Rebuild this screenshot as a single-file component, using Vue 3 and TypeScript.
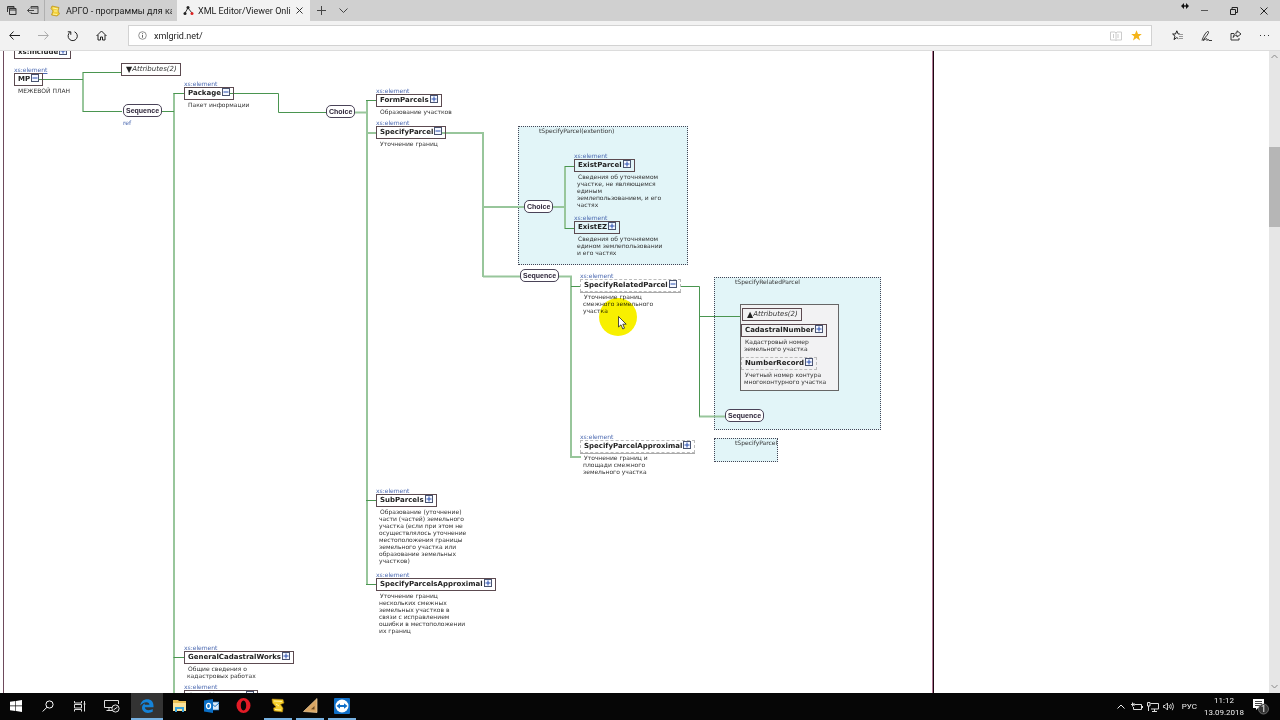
<script setup lang="ts">
import { reactive, ref } from 'vue'

interface SchemaNode {
  name: string
  x: number
  y: number
  open?: boolean
  optional?: boolean
  plain?: boolean
  text?: string
}

interface Panel { x: number; y: number; w: number; h: number; title: string }
interface Pill { label: string; x: number; y: number }

const address = ref('xmlgrid.net/')

const panels: Panel[] = [
  { x: 518, y: 75, w: 170, h: 139, title: 'tSpecifyParcel(extention)' },
  { x: 714, y: 226, w: 167, h: 153, title: 'tSpecifyRelatedParcel' },
  { x: 714, y: 387, w: 64, h: 24, title: 'tSpecifyParcel' },
]

const darkLines = [
  'M36 28.5H83M83 21.5H121M83 60.5H122',
  'M162 60.5H174M173.5 42.5H184M173.5 606.5H184',
  'M228 42.5H278.5V61.5H326',
  'M366 49.5H377M366 449.5H377M366 533.5H377',
  'M565 115.5H575M565 177.5H575M571 235.5H581',
  'M674 235.5H699.5V365.5M699 265.5H740',
]
const softLines = [
  'M83 21V61M174 42V660',
  'M354 61.5H367M367 49V534M367 82H377',
  'M440 82H483V226M483 156H524M483 225.5H520',
  'M553 156H565V115V178',
  'M558 225.5H571V406H581M699 365.5H726',
]

const pills: Pill[] = [
  { label: 'Sequence', x: 123, y: 53 },
  { label: 'Choice', x: 326, y: 54 },
  { label: 'Choice', x: 524, y: 149 },
  { label: 'Sequence', x: 520, y: 218 },
  { label: 'Sequence', x: 725, y: 358 },
]

const nodes = reactive<SchemaNode[]>([
  { name: 'xs:include', x: 14, y: -5, plain: true },
  { name: 'MP', x: 14, y: 14, open: true, text: 'МЕЖЕВОЙ ПЛАН' },
  { name: 'Package', x: 184, y: 28, open: true, text: 'Пакет информации' },
  { name: 'FormParcels', x: 376, y: 35, text: 'Образование участков' },
  { name: 'SpecifyParcel', x: 376, y: 67, open: true, text: 'Уточнение границ' },
  {
    name: 'ExistParcel', x: 574, y: 100,
    text: 'Сведения об уточняемом\nучастке, не являющемся\nединым\nземлепользованием, и его\nчастях',
  },
  {
    name: 'ExistEZ', x: 574, y: 162,
    text: 'Сведения об уточняемом\nедином землепользовании\nи его частях',
  },
  {
    name: 'SpecifyRelatedParcel', x: 580, y: 220, open: true, optional: true,
    text: 'Уточнение границ\nсмежного земельного\nучастка',
  },
  {
    name: 'SpecifyParcelApproximal', x: 580, y: 381, optional: true,
    text: 'Уточнение границ и\nплощади смежного\nземельного участка',
  },
  { name: 'CadastralNumber', x: 741, y: 273, plain: true, text: 'Кадастровый номер\nземельного участка' },
  {
    name: 'NumberRecord', x: 741, y: 306, plain: true, optional: true,
    text: 'Учетный номер контура\nмногоконтурного участка',
  },
  {
    name: 'SubParcels', x: 376, y: 435,
    text: 'Образование (уточнение)\nчасти (частей) земельного\nучастка (если при этом не\nосуществлялось уточнение\nместоположения границы\nземельного участка или\nобразование земельных\nучастков)',
  },
  {
    name: 'SpecifyParcelsApproximal', x: 376, y: 519,
    text: 'Уточнение границ\nнескольких смежных\nземельных участков в\nсвязи с исправлением\nошибки в местоположении\nих границ',
  },
  { name: 'GeneralCadastralWorks', x: 184, y: 592, text: 'Общие сведения о\nкадастровых работах' },
  { name: 'CoordSystems', x: 184, y: 631, open: true },
])

const place = (p: { x: number; y: number }) => ({ left: `${p.x}px`, top: `${p.y}px` })
const placeSized = (p: Panel) => ({ ...place(p), width: `${p.w}px`, height: `${p.h}px` })
</script>

<template>
  <div class="screen">
    <header class="titlebar">
      <button class="tool narrow" aria-label="Отложенные вкладки">
        <svg width="11" height="11" viewBox="0 0 11 11"><path d="M1.5 7V1.5H8M1.5 3H8V1.5M3.5 3.5H10V9.5H3.5ZM3.5 5H10" fill="none" stroke="#333" /></svg>
      </button>
      <button class="tool narrow" aria-label="Отложить вкладки">
        <svg width="12" height="11" viewBox="0 0 12 11"><path d="M4 3.5V1.5H11V8.5H4V7M4 3H11M0.5 5.5H7M2.5 3.5L0.5 5.5L2.5 7.5" fill="none" stroke="#444" /></svg>
      </button>
      <button class="tab">
        <svg width="11" height="12" viewBox="0 0 11 12"><path d="M2 1L9 2.5L8 6L9.5 9L7 11L1.5 10L3 6L1 3.5Z" fill="#f2d13c" stroke="#b98e12" stroke-width=".7" /><path d="M3 3L8 4M4 6H7.5M3 9L7 9.5" stroke="#fff3a0" stroke-width="1" /></svg>
        <span>АРГО - программы для кад</span>
      </button>
      <div class="tab active">
        <svg width="11" height="11" viewBox="0 0 11 11"><path d="M2 8L5 3L9 8" fill="none" stroke="#333" /><circle cx="5" cy="2.5" r="1.5" fill="#222" /><circle cx="2" cy="8.5" r="1.5" fill="#222" /><circle cx="9" cy="8.5" r="1.5" fill="#d22" /></svg>
        <span>XML Editor/Viewer Onli</span>
        <button class="close" aria-label="Закрыть вкладку">
          <svg width="7" height="7" viewBox="0 0 7 7"><path d="M.5 .5L6.5 6.5M6.5 .5L.5 6.5" stroke="#333" /></svg>
        </button>
      </div>
      <button class="tool narrow" aria-label="Новая вкладка">
        <svg width="9" height="9" viewBox="0 0 9 9"><path d="M4.5 0V9M0 4.5H9" stroke="#444" /></svg>
      </button>
      <button class="tool narrow" aria-label="Список вкладок">
        <svg width="9" height="6" viewBox="0 0 9 6"><path d="M.5 .5L4.5 4.5L8.5 .5" fill="none" stroke="#444" /></svg>
      </button>
      <div class="window-buttons">
        <svg class="resize" width="8" height="6" viewBox="0 0 8 6"><path d="M0 3L3 0V6ZM8 3L5 0V6Z" fill="#111" /><path d="M2 3H6" stroke="#111" stroke-width="1.4" /></svg>
        <button class="tool win" aria-label="Свернуть"><svg width="7" height="7" viewBox="0 0 7 7"><path d="M0 3.5H7" stroke="#555" /></svg></button>
        <button class="tool win" aria-label="Развернуть"><svg width="8" height="8" viewBox="0 0 8 8"><path d="M.5 2.5H5.5V7.5H.5ZM2 2.5V.5H7.5V5.5H5.5" fill="none" stroke="#222" /></svg></button>
        <button class="tool win" aria-label="Закрыть"><svg width="8" height="8" viewBox="0 0 8 8"><path d="M.5 .5L7.5 7.5M7.5 .5L.5 7.5" stroke="#222" /></svg></button>
      </div>
    </header>

    <nav class="toolbar">
      <button class="tool" aria-label="Назад"><svg width="11" height="9" viewBox="0 0 11 9"><path d="M11 4.5H1M4.5 .5L.7 4.5L4.5 8.5" fill="none" stroke="#222" /></svg></button>
      <button class="tool" aria-label="Вперёд"><svg width="11" height="9" viewBox="0 0 11 9"><path d="M0 4.5H10M6.5 .5L10.3 4.5L6.5 8.5" fill="none" stroke="#aaa" /></svg></button>
      <button class="tool" aria-label="Обновить"><svg width="12" height="12" viewBox="0 0 12 12"><path d="M7.5 1.8A4.6 4.6 0 1 1 3.2 2.2M.8 1.8H3.8V4.8" fill="none" stroke="#222" /></svg></button>
      <button class="tool" aria-label="Домой"><svg width="11" height="11" viewBox="0 0 11 11"><path d="M.5 6L5.5 1L10.5 6M2 5V10H4.5V7H6.5V10H9V5" fill="none" stroke="#222" /></svg></button>
      <div class="address">
        <svg width="9" height="9" viewBox="0 0 9 9"><circle cx="4.5" cy="4.5" r="3.8" fill="none" stroke="#777" stroke-width=".8" /><path d="M4.5 4V6.7M4.5 2.2V3.2" stroke="#666" /></svg>
        <input v-model="address" type="text" aria-label="Адрес">
        <button class="tool small" aria-label="Режим чтения"><svg width="12" height="10" viewBox="0 0 12 10"><path d="M.5 1H5L6 2L7 1H11.5V9H7L6 9.5L5 9H.5ZM6 2V9M8 3V7M3.5 3V7" fill="none" stroke="#ccc" /></svg></button>
        <button class="tool small" aria-label="В избранном"><svg width="11" height="11" viewBox="0 0 11 11"><path d="M5.5 .3L7 4H10.8L7.8 6.4L9 10.4L5.5 8L2 10.4L3.2 6.4L.2 4H4Z" fill="#f4b41a" /></svg></button>
      </div>
      <button class="tool" aria-label="Избранное"><svg width="12" height="11" viewBox="0 0 12 11"><path d="M7.8 4H6.2L4.8 .8L3.5 4H.6L3 6.2L2 9.6L4.8 7.6L6.3 8.7" fill="none" stroke="#222" /><path d="M7 4.5H11M7 6.5H11M7 8.5H11" stroke="#999" stroke-width="1.2" /></svg></button>
      <button class="tool" aria-label="Заметка"><svg width="12" height="12" viewBox="0 0 12 12"><path d="M1 10.5C2 7 4.5 2.5 6.5 1.5C8.5 1 7.5 4 4.5 7L2 10.5L4.8 9C6 7.8 6.3 9.5 6 10.5C7 9 8 9.5 8 10.5H11" fill="none" stroke="#222" stroke-width=".9" /></svg></button>
      <button class="tool" aria-label="Поделиться"><svg width="12" height="11" viewBox="0 0 12 11"><path d="M4 3.5H1V10H9V8M7 .8L11 4L7 7V5.2C5 5 4 6 3.2 7.5C3.4 4.8 4.8 3 7 2.8Z" fill="none" stroke="#222" stroke-width=".9" /></svg></button>
      <button class="tool" aria-label="Ещё"><svg width="11" height="3" viewBox="0 0 11 3"><path d="M1 1.5H2M5 1.5H6M9 1.5H10" stroke="#333" stroke-width="1.2" /></svg></button>
    </nav>

    <main class="viewport">
      <div class="canvas">
        <section v-for="p in panels" :key="p.title" class="panel" :style="placeSized(p)">
          <span>{{ p.title }}</span>
        </section>
        <div class="attribute-group" />
        <svg class="wires" fill="none">
          <path d="M3.5 0V660" stroke="#6e4a5c" />
          <path d="M932.5 0V660" stroke="#b07a96" />
          <path d="M933.5 0V660" stroke="#1c0510" />
          <path v-for="d in softLines" :key="d" :d="d" stroke="#98c69b" stroke-width="2" />
          <path v-for="d in darkLines" :key="d" :d="d" stroke="#4a9550" />
        </svg>

        <button class="attributes top"><i class="mark">▼</i><i>Attributes(2)</i></button>
        <button class="attributes inner"><i class="mark">▲</i><i>Attributes(2)</i></button>
        <a class="ref" href="#ref">ref</a>
        <span v-for="p in pills" :key="`${p.x}-${p.y}`" class="pill" :style="place(p)">{{ p.label }}</span>

        <article v-for="n in nodes" :key="n.name" class="node" :style="place(n)">
          <a v-if="!n.plain" class="kind" href="#element">xs:element</a>
          <div class="box" :class="{ optional: n.optional, raised: n.optional && !n.plain }">
            <b>{{ n.name }}</b>
            <button class="toggle" :aria-label="n.name" :aria-expanded="!!n.open" @click="n.open = !n.open">
              <svg width="8" height="8" viewBox="0 0 8 8">
                <rect x=".5" y=".5" width="7" height="7" fill="#f4f7ff" stroke="#4a5470" />
                <path :d="n.open ? 'M1.5 4H6.5' : 'M1.5 4H6.5M4 1.5V6.5'" stroke="#2a50b0" />
              </svg>
            </button>
          </div>
          <p v-if="n.text">{{ n.text }}</p>
        </article>

        <div class="spot" />
        <svg class="pointer" width="9" height="14" viewBox="0 0 9 14"><path d="M.5 .5V11L3 8.8L4.8 13L6.5 12.2L4.8 8.2H8.2Z" fill="#fff" stroke="#222" stroke-width=".8" /></svg>
      </div>
      <div class="scrollbar">
        <svg width="7" height="5" viewBox="0 0 7 5"><path d="M.5 4L3.5 1L6.5 4" fill="none" stroke="#888" /></svg>
        <div class="track"><div class="thumb" /></div>
        <svg width="7" height="5" viewBox="0 0 7 5"><path d="M.5 1L3.5 4L6.5 1" fill="none" stroke="#888" /></svg>
      </div>
    </main>

    <footer class="taskbar">
      <button class="app" aria-label="Пуск"><svg width="12" height="12" viewBox="0 0 12 12"><path d="M0 1.7L5.4 1V5.6H0ZM6 .9L12 0V5.6H6ZM0 6.3H5.4V11L0 10.3ZM6 6.3H12V12L6 11.1Z" fill="#fff" /></svg></button>
      <button class="app" aria-label="Поиск"><svg width="12" height="12" viewBox="0 0 12 12"><circle cx="7.5" cy="4.5" r="3.6" fill="none" stroke="#fff" /><path d="M5 7.2L.7 11.5" stroke="#fff" /></svg></button>
      <button class="app" aria-label="Представление задач"><svg width="12" height="12" viewBox="0 0 12 12"><path d="M.5 1V3H7.5V1M.5 4.5H7.5V8H.5ZM.5 11.5V9.5H7.5V11.5M10.5 1V11.5M9.5 4H11.5" fill="none" stroke="#ddd" /></svg></button>
      <button class="app" aria-label="Подключения"><svg width="16" height="14" viewBox="0 0 16 14"><path d="M9 8.5H.5V1.5H14.5V5M5 8.5V11.5M2.5 11.5H8" fill="none" stroke="#ddd" /><circle cx="11.5" cy="9.5" r="3.6" fill="#111" stroke="#ddd" /><path d="M9.5 11L13.5 8" stroke="#ddd" /></svg></button>
      <div class="apps">
        <button class="app current" aria-label="Edge"><svg width="14" height="14" viewBox="0 0 14 14"><path d="M.3 6.5C1 2.3 3.8 .3 7.2 .3C11.2 .3 13.5 3 13.5 6.8V8.3H4.8C5 10.4 6.6 11.2 8.5 11.2C10.2 11.2 11.6 10.7 12.7 10V12.8C11.4 13.5 9.8 13.9 8 13.9C4.2 13.9 2 11.6 2 8.8C2 6.6 3.3 5 5 4.2C4.4 4.8 4.9 5.5 4.8 5.8H9.4C9.4 4 8.4 3.2 6.5 3.2C4 3.2 1.8 4.6 .3 6.5Z" fill="#1583d8" /></svg></button>
        <button class="app" aria-label="Проводник"><svg width="15" height="14" viewBox="0 0 15 14"><path d="M1 1H6L7 2H14V12H1Z" fill="#e8bf55" /><path d="M1 4H14V12H1Z" fill="#fbe39a" /><path d="M3 13V8H12V13H10V10H5V13Z" fill="#39a4dc" /></svg></button>
        <button class="app" aria-label="Outlook"><svg width="15" height="14" viewBox="0 0 15 14"><path d="M7 3H15V11H7Z" fill="#dcebf8" stroke="#1570c0" stroke-width=".7" /><path d="M7 4L11 7.5L15 4" fill="none" stroke="#1570c0" /><path d="M0 1.5L9 0V14L0 12.5Z" fill="#0a6fc6" /><ellipse cx="4.5" cy="7" rx="2" ry="2.6" fill="none" stroke="#fff" stroke-width="1.3" /></svg></button>
        <button class="app" aria-label="Opera"><svg width="15" height="15" viewBox="0 0 15 15"><path d="M7.5 0A7 7.5 0 1 0 7.5 15A7 7.5 0 1 0 7.5 0ZM7.5 2.5C9.2 2.5 10.2 4.8 10.2 7.5S9.2 12.5 7.5 12.5S4.8 10.2 4.8 7.5S5.8 2.5 7.5 2.5Z" fill="#e21b26" fill-rule="evenodd" /></svg></button>
      </div>
      <div class="apps">
        <button class="app running" aria-label="АРГО"><svg width="14" height="15" viewBox="0 0 14 15"><path d="M1 1L12 1.5L13 5L9.5 6.5L12 10L11.5 14L3 13L2.5 10L5 9L1.5 5Z" fill="#f5cf2b" stroke="#a77b08" stroke-width=".6" /><path d="M3 3L11 3.5M5 6L8 8M4 11.5L10 12" stroke="#fff2a0" /></svg></button>
        <button class="app running" aria-label="Чертёж"><svg width="15" height="15" viewBox="0 0 15 15"><path d="M14 .5V14.5L.5 13.5Z" fill="#d9a664" stroke="#f3d3a0" stroke-width=".7" /><path d="M11.5 8V11.5L8 11.2Z" fill="#6b4a24" /></svg></button>
        <button class="app running" aria-label="TeamViewer"><svg width="16" height="16" viewBox="0 0 16 16"><rect width="16" height="16" rx="1" fill="#0f6fc8" /><circle cx="8" cy="8" r="6.5" fill="#fff" /><path d="M2.5 8L6 5.2V7H10V5.2L13.5 8L10 10.8V9H6V10.8Z" fill="#0f6fc8" /></svg></button>
      </div>
      <div class="tray">
        <button class="tool tiny" aria-label="Скрытые значки"><svg width="8" height="5" viewBox="0 0 8 5"><path d="M.5 4.5L4 1L7.5 4.5" fill="none" stroke="#eee" /></svg></button>
        <button class="tool tiny" aria-label="Питание"><svg width="12" height="9" viewBox="0 0 12 9"><path d="M4 2.5H10.5V7.5H2.5V5M11.5 4V6M0 2.5H3.5M1.5 .5V4.5M3 1V4" fill="none" stroke="#ddd" /></svg></button>
        <button class="tool tiny" aria-label="Сеть"><svg width="12" height="10" viewBox="0 0 12 10"><path d="M3.5 1.5H11.5V7H4M7.5 7V9.5M5 9.5H10M.5 .5H3V4H.5ZM1.5 4V9" fill="none" stroke="#ddd" /></svg></button>
        <button class="tool tiny" aria-label="Громкость"><svg width="12" height="9" viewBox="0 0 12 9"><path d="M.5 3.5H2L4.5 1V8L2 5.5H.5ZM6 3Q7 4.5 6 6M7.5 2Q9.2 4.5 7.5 7M9.3 .8Q11.8 4.5 9.3 8.2" fill="none" stroke="#ddd" stroke-width=".9" /></svg></button>
        <button class="language">РУС</button>
        <time class="clock"><span>11:12</span><span>13.09.2018</span></time>
        <button class="notifications" aria-label="Уведомления: 1">
          <svg width="16" height="17" viewBox="0 0 16 17"><path d="M0 1H11V10H5L3 12V10H0Z" fill="#fff" /><path d="M2 3.5H9M2 5.5H9M2 7.5H7" stroke="#444" /><circle cx="10.5" cy="11" r="5" fill="#333" stroke="#888" stroke-width=".7" /></svg>
          <span>1</span>
        </button>
      </div>
    </footer>
  </div>
</template>

<style>
html, body { margin: 0; background: #fff; }
</style>

<style scoped>
* { box-sizing: border-box; }
.screen {
  display: flex;
  flex-direction: column;
  height: 100vh;
  overflow: hidden;
  font-family: Roboto, "Open Sans", sans-serif;
  font-size: 9px;
  color: #222;
}
button, input { font: inherit; color: inherit; border: 0; padding: 0; margin: 0; background: none; }
svg { display: block; flex: none; }

.titlebar { display: flex; flex: none; height: 21px; background: #d0d0d0; }
.tool { display: flex; align-items: center; justify-content: center; width: 29px; height: 100%; flex: none; }
.narrow { width: 22px; }
.tab {
  display: flex;
  align-items: center;
  gap: 5px;
  width: 133px;
  padding: 0 5px;
  border-left: 1px solid #b0b0b0;
  text-align: left;
}
.tab span { flex: 1; min-width: 0; overflow: hidden; white-space: nowrap; }
.tab.active { gap: 4px; background: #f2f2f2; border-color: #f2f2f2; }
.close { display: flex; padding: 2px 2px 2px 0; }
.window-buttons { display: flex; margin-left: auto; padding-right: 1px; }
.resize { margin-top: 3px; }
.win { width: 30px; }

.toolbar { display: flex; flex: none; align-items: center; height: 30px; padding-right: 1px; background: #f2f2f2; border-bottom: 1px solid #dcdcdc; }
.address {
  display: flex;
  flex: 1;
  align-items: center;
  height: 21px;
  margin: 0 11px 0 12px;
  padding: 0 4px 0 9px;
  background: #fff;
  border: 1px solid #d2d2d2;
}
.address input { flex: 1; min-width: 0; margin-left: 7px; outline: none; }
.small { width: 21px; }

.viewport { display: flex; flex: 1; min-height: 0; background: #fff; }
.canvas { position: relative; flex: 1; overflow: hidden; font-family: "DejaVu Sans", sans-serif; font-size: 6px; line-height: 7px; color: #333; }
.wires { position: absolute; inset: 0; width: 100%; height: 100%; }
.panel { position: absolute; padding: 0 0 0 20px; overflow: hidden; background: #e2f5f8; border: 1px dotted #445; white-space: nowrap; }
.attribute-group { position: absolute; left: 740px; top: 253px; width: 99px; height: 87px; background: #f2f2f3; border: 1px solid #666; }
.attributes { position: absolute; display: flex; align-items: center; height: 13px; padding: 0 3px 0 4px; border: 1px solid #5c4a50; font-size: 7px; line-height: 11px; color: #333; }
.attributes .mark { font-style: normal; font-size: 8px; color: #222; }
.attributes.top { left: 121px; top: 12px; background: #fff; }
.attributes.inner { left: 742px; top: 257px; }
.ref { position: absolute; left: 123px; top: 68px; color: #4a68b0; text-decoration: none; }
.pill {
  position: absolute;
  height: 13px;
  padding: 0 2px;
  border: 1px solid #4a4358;
  border-radius: 5px;
  background: #fff;
  font: bold 7px/11px "Liberation Sans", Arial, sans-serif;
  color: #2c2438;
}
.node { position: absolute; display: flex; flex-direction: column; align-items: flex-start; }
.kind { height: 8px; line-height: 9px; color: #4a68b0; }
.box { display: flex; align-items: center; height: 13px; padding: 0 3px; border: 1px solid #5c4a50; white-space: nowrap; }
.box b { font-size: 7px; line-height: 11px; color: #222; }
.box.optional { border: 1px dashed #bbb; }
.box.raised { background: #fff; box-shadow: 0 1px 0 #aaa; }
.toggle { display: flex; margin: 0 0 3px 1px; }
.node p { margin: 1px 0 0 3px; white-space: pre-line; text-indent: 1px; }

.spot { position: absolute; left: 599px; top: 247px; width: 38px; height: 38px; border-radius: 50%; background: #f8f000; mix-blend-mode: multiply; }
.pointer { position: absolute; left: 618px; top: 265px; }

.scrollbar { display: flex; flex-direction: column; align-items: center; flex: none; width: 11px; padding: 3px 0 4px; background: #e6e6e6; }
.track { flex: 1; width: 100%; padding-top: 88px; }
.thumb { height: 80px; background: #b6b6b6; }

.taskbar { display: flex; flex: none; height: 27px; background: #060606; color: #eee; }
.app { display: flex; align-items: center; justify-content: center; width: 32px; height: 27px; flex: none; border-bottom: 2px solid transparent; }
.apps { display: flex; margin-left: 3px; }
.app.current { background: #333; border-color: #76b0e0; }
.app.running { width: 28px; margin: 0 2px; border-color: #76b0e0; }
.tray { display: flex; align-items: center; margin-left: auto; padding-right: 2px; }
.tiny { width: 16px; }
.language { margin-left: 5px; font-size: 8px; }
.clock { display: flex; flex-direction: column; align-items: center; width: 54px; font-size: 8px; line-height: 12px; }
.notifications { position: relative; margin: 0 9px 0 2px; }
.notifications span { position: absolute; left: 8px; top: 5px; line-height: 12px; color: #fff; }
</style>
